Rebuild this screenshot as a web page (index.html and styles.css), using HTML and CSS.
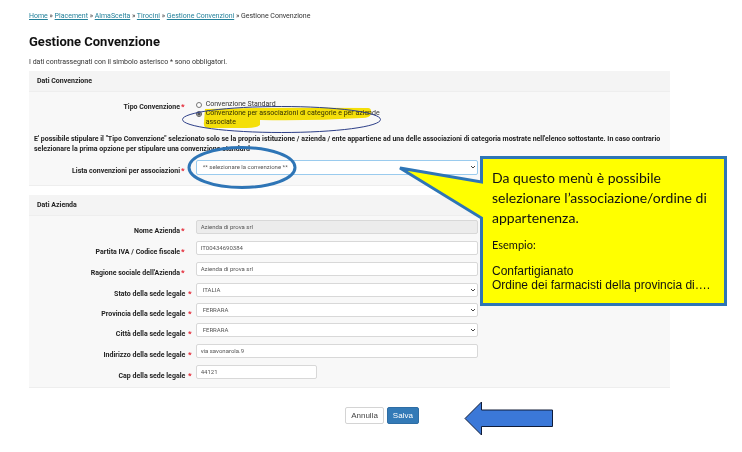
FILE: index.html
```html
<!DOCTYPE html>
<html lang="it">
<head>
<meta charset="utf-8">
<title>Gestione Convenzione</title>
<link rel="stylesheet" href="styles.css">
</head>
<body>
<main class="page">
  <nav class="breadcrumb"><a href="#">Home</a> » <a href="#">Placement</a> » <a href="#">AlmaScelta</a> » <a href="#">Tirocini</a> » <a href="#">Gestione Convenzioni</a> » Gestione Convenzione</nav>
  <h1>Gestione Convenzione</h1>
  <p class="intro">I dati contrassegnati con il simbolo asterisco * sono obbligatori.</p>
  <form>
    <section class="panel">
      <h2>Dati Convenzione</h2>
      <div class="panel-body">
        <div class="row row-type" role="radiogroup" aria-labelledby="tipo">
          <span class="label wide-gap" id="tipo">Tipo Convenzione<i>*</i></span>
          <div class="radios">
            <label><input type="radio" name="tipo"><span>Convenzione Standard</span></label>
            <label><input type="radio" name="tipo" checked><span>Convenzione per associazioni di categorie e per aziende associate</span></label>
          </div>
        </div>
        <p class="note">E' possibile stipulare il "Tipo Convenzione" selezionato solo se la propria istituzione / azienda / ente appartiene ad una delle associazioni di categoria mostrate nell'elenco sottostante. In caso contrario selezionare la prima opzione per stipulare una convenzione standard</p>
        <div class="row">
          <label class="label wide-gap" for="lista">Lista convenzioni per associazioni<i>*</i></label>
          <div class="select active"><select id="lista"><option>** selezionare la convenzione **</option></select><svg viewBox="0 0 6 4"><path d="M1 1l2 2 2-2"/></svg></div>
        </div>
      </div>
    </section>
    <section class="panel">
      <h2>Dati Azienda</h2>
      <div class="panel-body company">
        <div class="row"><label class="label wide-gap" for="nome">Nome Azienda<i>*</i></label><input class="field" id="nome" value="Azienda di prova srl" disabled></div>
        <div class="row"><label class="label wide-gap" for="piva">Partita IVA / Codice fiscale<i>*</i></label><input class="field" id="piva" value="IT00434690384"></div>
        <div class="row"><label class="label wide-gap" for="ragione">Ragione sociale dell'Azienda<i>*</i></label><input class="field" id="ragione" value="Azienda di prova srl"></div>
        <div class="row row-select"><label class="label" for="stato">Stato della sede legale <i>*</i></label><div class="select"><select id="stato"><option>ITALIA</option></select><svg viewBox="0 0 6 4"><path d="M1 1l2 2 2-2"/></svg></div></div>
        <div class="row row-select"><label class="label" for="prov">Provincia della sede legale <i>*</i></label><div class="select"><select id="prov"><option>FERRARA</option></select><svg viewBox="0 0 6 4"><path d="M1 1l2 2 2-2"/></svg></div></div>
        <div class="row"><label class="label" for="citta">Città della sede legale <i>*</i></label><div class="select"><select id="citta"><option>FERRARA</option></select><svg viewBox="0 0 6 4"><path d="M1 1l2 2 2-2"/></svg></div></div>
        <div class="row"><label class="label" for="indirizzo">Indirizzo della sede legale <i>*</i></label><input class="field" id="indirizzo" value="via savonarola.9"></div>
        <div class="row"><label class="label" for="cap">Cap della sede legale <i>*</i></label><input class="field short" id="cap" value="44121"></div>
      </div>
    </section>
    <div class="actions">
      <button type="button" class="btn">Annulla</button>
      <button type="button" class="btn primary">Salva</button>
    </div>
  </form>
</main>
<svg class="marker" width="742" height="452" viewBox="0 0 742 452">
  <path d="M205 109 Q290 107 368 108 Q372 108 371 114 Q370 118 362 118 Q310 121 260 120 L260 125 Q257 128 246 128 L208 128 Q203 128 204 122 Z" fill="#fbe60a"/>
</svg>
<svg class="drawing" width="742" height="452" viewBox="0 0 742 452">
  <ellipse cx="281.500" cy="119.500" rx="99" ry="13" fill="none" stroke="#2d3f88" stroke-width="1"/>
  <ellipse cx="242" cy="167.500" rx="53" ry="20" fill="none" stroke="#2e75b6" stroke-width="3"/>
  <path d="M481.500 157.500H725.500V304.500H481.500V218L400 168L481.500 182Z" fill="#ff0" stroke="#2e75b6" stroke-width="3"/>
  <path d="M465 418.500L481.500 402V410H552.500V426.500H481.500V435Z" fill="#3b78d8" stroke="#101c38" stroke-width="1"/>
</svg>
<aside class="callout">
  <p class="lead">Da questo menù è possibile selezionare l’associazione/ordine di appartenenza.</p>
  <p class="example">Esempio:</p>
  <p class="names">Confartigianato<br>Ordine dei farmacisti della provincia di….</p>
</aside>
</body>
</html>
```
FILE: styles.css
```css
* { box-sizing: border-box; }
body {
  margin: 0;
  position: relative;
  background: #fff;
  color: #333;
  font: 7px/10px Roboto, "Liberation Sans", Arial, sans-serif;
}
h1, h2, p { margin: 0; }
.page { padding: 11px 72px 27px 29px; }
.breadcrumb a { color: #23809a; }
h1 { margin-top: 13px; font-size: 13px; line-height: 16px; color: #111; }
.intro { margin-top: 7px; }
form { margin-top: 4px; }
.panel { background: #f8f8f8; border-bottom: 1px solid #eee; margin-bottom: 9px; }
.panel h2 {
  padding: 5px 8px;
  background: #f4f4f4;
  border-bottom: 1px solid #eee;
  font-size: 7px;
  line-height: 10px;
  color: #222;
}
.panel-body { padding: 8px 5px 9px; }
.row { display: grid; grid-template-columns: 26% 44%; align-items: start; margin: 0 -5px; }
.label { padding: 6px 4px 0 0; text-align: right; font-weight: bold; color: #222; line-height: 10px; }
.label i { color: #e3212f; font-size: 8px; font-style: normal; margin-left: 1px; }
.wide-gap { padding-right: 11px; }
.row-type .label { padding-top: 2px; }
.radios label { display: flex; gap: 4px; width: 192px; line-height: 9px; }
.radios input { flex: none; width: 6px; height: 6px; margin: 2px 0 1px; accent-color: #555; }
.note { margin: 7px 0 6px; font-weight: bold; color: #222; }
.field, .select select {
  width: 100%;
  height: 14px;
  padding: 0 4px 1px;
  border: 1px solid #d8d8d8;
  border-radius: 2px;
  background: #fff;
  color: #555;
  font: 6px/10px Roboto, "Liberation Sans", Arial, sans-serif;
}
.field:disabled { background: #ececec; }
.short { width: 121px; }
.select { position: relative; height: 15px; }
.select select { appearance: none; display: block; padding-left: 6px; }
.select.active select { height: 15px; border-color: #9acbee; }
.select svg { position: absolute; right: 2px; top: 5px; width: 6px; height: 4px; fill: none; stroke: #444; }
.company { padding-top: 4px; padding-bottom: 1px; }
.company .row { height: 21px; }
.company .row-select { height: 20px; }
.actions { display: flex; justify-content: center; gap: 3px; margin-top: 19px; padding-left: 65px; }
.btn {
  height: 17px;
  padding: 0 5px;
  border: 1px solid #d4d4d4;
  border-radius: 2px;
  background: #fff;
  color: #444;
  font: 8px/10px "Liberation Sans", Arial, sans-serif;
}
.primary { border-color: #2e6da4; background: #337ab7; color: #fff; }
.marker, .drawing { position: absolute; left: 0; top: 0; pointer-events: none; }
.marker { mix-blend-mode: multiply; }
.callout { position: absolute; left: 492px; top: 168px; width: 225px; color: #111; }
.lead { font: 14px/20px Lato, sans-serif; }
.example { margin-top: 10px; font: 11px/14px Lato, sans-serif; }
.names { margin-top: 12px; font: 12px/14px "Liberation Sans", Arial, sans-serif; }
```
